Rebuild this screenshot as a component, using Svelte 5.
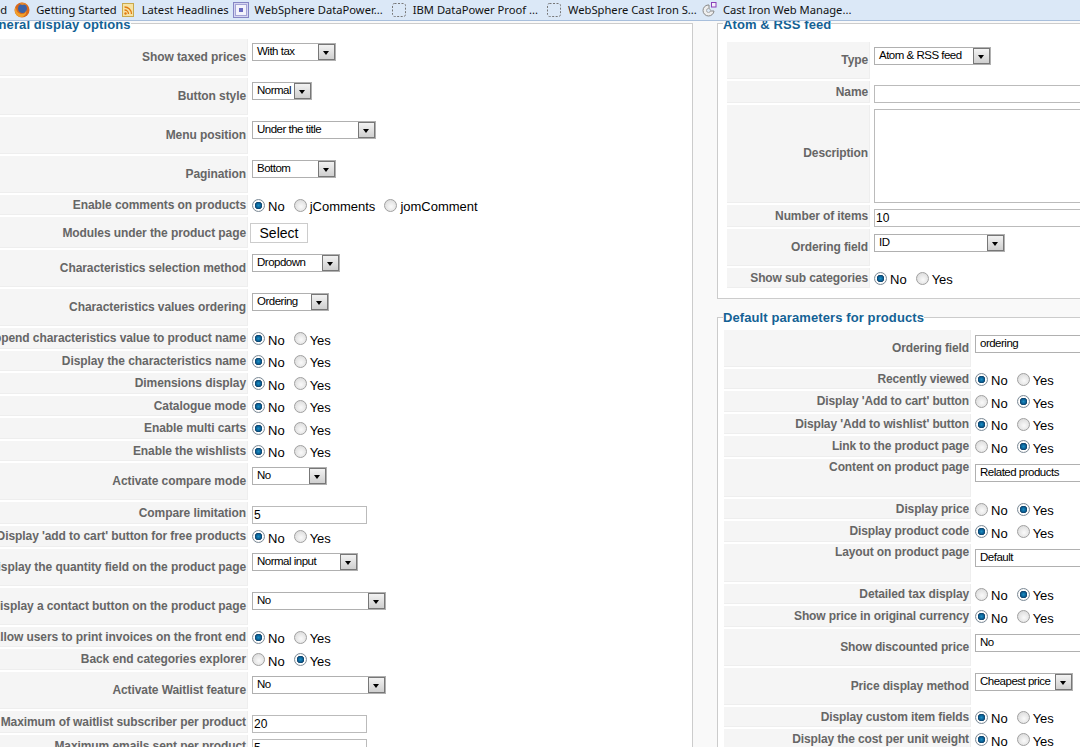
<script>
  // gap = space before each bookmark in the toolbar
  const links = [
    { icon: 'firefox', text: 'Getting Started', gap: 7 },
    { icon: 'rss', text: 'Latest Headlines', gap: 3 },
    { icon: 'square', text: 'WebSphere DataPower...', gap: 4 },
    { icon: 'dashed', text: 'IBM DataPower Proof ...', gap: 8 },
    { icon: 'dashed', text: 'WebSphere Cast Iron S...', gap: 8 },
    { icon: 'pie', text: 'Cast Iron Web Manage...', gap: 4 }
  ];

  const yn = (label, checked = 'No') => ({ kind: 'radio', label, checked, options: ['No', 'Yes'] });
  const sel = (label, value, width, top = false) => ({ kind: 'select', label, value, width, top });
  const txt = (label, value, width) => ({ kind: 'input', label, value, width });

  const general = [
    sel('Show taxed prices', 'With tax', 84),
    sel('Button style', 'Normal', 60),
    sel('Menu position', 'Under the title', 124),
    sel('Pagination', 'Bottom', 84),
    { kind: 'radio', label: 'Enable comments on products', checked: 'No', options: ['No', 'jComments', 'jomComment'] },
    { kind: 'button', label: 'Modules under the product page', value: 'Select' },
    sel('Characteristics selection method', 'Dropdown', 88),
    sel('Characteristics values ordering', 'Ordering', 77),
    yn('Append characteristics value to product name'),
    yn('Display the characteristics name'),
    yn('Dimensions display'),
    yn('Catalogue mode'),
    yn('Enable multi carts'),
    yn('Enable the wishlists'),
    sel('Activate compare mode', 'No', 75),
    txt('Compare limitation', '5', 115),
    yn("Display 'add to cart' button for free products"),
    sel('Display the quantity field on the product page', 'Normal input', 106),
    sel('Display a contact button on the product page', 'No', 134),
    yn('Allow users to print invoices on the front end'),
    yn('Back end categories explorer', 'Yes'),
    sel('Activate Waitlist feature', 'No', 134),
    txt('Maximum of waitlist subscriber per product', '20', 115),
    txt('Maximum emails sent per product', '5', 115)
  ];

  const feed = [
    sel('Type', 'Atom & RSS feed', 117),
    txt('Name', '', 320),
    { kind: 'textarea', label: 'Description' },
    txt('Number of items', '10', 320),
    sel('Ordering field', 'ID', 131),
    yn('Show sub categories')
  ];

  const defaults = [
    sel('Ordering field', 'ordering', 220),
    yn('Recently viewed'),
    yn("Display 'Add to cart' button", 'Yes'),
    yn("Display 'Add to wishlist' button"),
    yn('Link to the product page', 'Yes'),
    sel('Content on product page', 'Related products', 220, true),
    yn('Display price', 'Yes'),
    yn('Display product code'),
    sel('Layout on product page', 'Default', 220, true),
    yn('Detailed tax display', 'Yes'),
    yn('Show price in original currency'),
    sel('Show discounted price', 'No', 220),
    sel('Price display method', 'Cheapest price', 98),
    yn('Display custom item fields'),
    yn('Display the cost per unit weight')
  ];
</script>

{#snippet rows(list, group)}
  <div class="rows">
    {#each list as row, i}
      <div class="row row-{row.kind}" class:tall={row.top}>
        <div class="label" class:top={row.top}>{row.label}</div>
        <div class="value">
          {#if row.kind === 'select'}
            <div class="select" style="width: {row.width}px">
              <span class="current">{row.value}</span>
              <span class="arrow"></span>
            </div>
          {:else if row.kind === 'radio'}
            {#each row.options as option}
              <label class="option">
                <input type="radio" name="{group}-{i}" checked={option === row.checked} />
                {option}
              </label>
            {/each}
          {:else if row.kind === 'input'}
            <input class="text" type="text" value={row.value} style="width: {row.width}px" />
          {:else if row.kind === 'textarea'}
            <textarea></textarea>
          {:else}
            <button type="button">{row.value}</button>
          {/if}
        </div>
      </div>
    {/each}
  </div>
{/snippet}

<div class="toolbar">
  <span class="cut">ed</span>
  {#each links as link}
    <span class="link" style="margin-left: {link.gap}px">
      <svg width="16" height="16" viewBox="0 0 16 16">
        {#if link.icon === 'firefox'}
          <circle cx="8" cy="8" r="7.500" fill="#d9691c" />
          <circle cx="8.500" cy="6.500" r="4.500" fill="#3a62a8" />
          <path d="M2 5c0 5 3 7 6 7 3 0 4-2 4-4 1 3-1 6.500-4 7C4 15.500 0 12 1 7z" fill="#f0a02c" />
          <path d="M6 1c3-1 6 0 8 3-2-1-3-2-5-1-2 0-3-1-3-2z" fill="#e8882a" />
        {:else if link.icon === 'rss'}
          <rect x="2.500" y="1.500" width="11" height="13" fill="#f6e3a4" stroke="#c9a94e" />
          <circle cx="5.500" cy="11.500" r="1.200" fill="#e07a10" />
          <path d="M4.500 8a4 4 0 0 1 4 4M4.500 5a7 7 0 0 1 7 7" fill="none" stroke="#e07a10" stroke-width="1.300" />
        {:else if link.icon === 'square'}
          <rect x="0.500" y="0.500" width="15" height="15" fill="#d5d5f0" stroke="#8686c4" />
          <rect x="2.500" y="2.500" width="11" height="11" fill="#f3f3fb" stroke="#a4a4d6" />
          <rect x="6" y="6" width="4" height="4" fill="#6a6ac0" />
        {:else if link.icon === 'dashed'}
          <rect x="1.500" y="1.500" width="13" height="13" rx="2" fill="none" stroke="#777" stroke-dasharray="2 1.500" />
        {:else}
          <path d="M7 3a5.500 5.500 0 1 0 6 6H8V3z" fill="#eee" stroke="#888" />
          <circle cx="7.500" cy="8.500" r="2" fill="#dbe8f7" stroke="#aaa" />
          <rect x="10.500" y="0.500" width="4.500" height="4.500" fill="#f5eefa" stroke="#8a3fb8" />
        {/if}
      </svg>
      {link.text}
    </span>
  {/each}
</div>

<main>
  <fieldset class="general">
    <legend>General display options</legend>
    {@render rows(general, 'general')}
  </fieldset>

  <div class="side">
    <fieldset class="feed">
      <legend>Atom &amp; RSS feed</legend>
      {@render rows(feed, 'feed')}
    </fieldset>
    <fieldset class="defaults">
      <legend>Default parameters for products</legend>
      {@render rows(defaults, 'defaults')}
    </fieldset>
  </div>
</main>

<style>
  :global(body) {
    background: #f9f9f9;
    overflow: hidden;
  }

  .toolbar {
    height: 20px;
    display: flex;
    align-items: center;
    background: #dbe8f7;
    border-bottom: 1px solid #a8bfdc;
    font: 11.2px/20px "Noto Sans", sans-serif;
    color: #111;
    white-space: nowrap;
    overflow: hidden;
  }

  .cut {
    margin-left: -6px;
  }

  .link {
    display: flex;
    align-items: center;
    gap: 6px;
  }

  main {
    display: flex;
    align-items: flex-start;
    height: 726px;
    margin-left: -25px;
    overflow: hidden;
    font-family: "Liberation Sans", Arial, sans-serif;
  }

  fieldset {
    flex: none;
    min-width: 0;
    margin: 0;
    padding: 0 5px;
    background: #fff;
    border: 1px solid #ccc;
  }

  legend {
    padding: 0;
    font-size: 13px;
    line-height: 15px;
    font-weight: bold;
    letter-spacing: 0.1px;
    color: #146295;
  }

  .general legend,
  .feed legend {
    padding-top: 2px;
  }

  .general {
    width: 718px;
    height: 800px;
    margin-top: -6px;
    box-sizing: border-box;
    --label: 267px;
    --tracking: -0.08px;
  }

  .general .rows {
    padding-top: 6.5px;
  }

  .side {
    flex: none;
    width: 500px;
    margin-left: 24px;
    margin-top: -6px;
  }

  .feed {
    width: 100%;
    box-sizing: border-box;
    height: 284px;
    --label: 143px;
  }

  .feed .rows {
    padding: 9.5px 0 0 4px;
  }

  .defaults {
    width: 100%;
    box-sizing: border-box;
    margin-top: 10.5px;
    --label: 247px;
  }

  .defaults .rows {
    padding: 5px 0 0 1px;
  }

  .feed .row-select .value,
  .defaults .row-select .value {
    padding-top: 5px;
  }

  .rows {
    display: flex;
    flex-direction: column;
    gap: 2px;
  }

  .row {
    display: grid;
    grid-template-columns: var(--label) 1fr;
  }

  .row-radio {
    height: 20.5px;
  }

  .row-select {
    height: 37px;
  }

  .row-select.tall {
    height: 38px;
  }

  .row-input {
    height: 22px;
  }

  .row-button {
    height: 31px;
  }

  .row-textarea {
    height: 98px;
  }

  .label {
    display: flex;
    align-items: center;
    justify-content: flex-end;
    box-sizing: border-box;
    padding-right: 1px;
    background: #f5f5f5;
    border-right: 1px solid #eee;
    border-bottom: 1px solid #eee;
    font-size: 12px;
    font-weight: bold;
    letter-spacing: var(--tracking, -0.12px);
    color: #666;
    white-space: nowrap;
  }

  .row-radio .label,
  .row-input .label,
  .row-button .label {
    padding-top: 1px;
  }

  .label.top {
    align-items: flex-start;
    padding-top: 1px;
  }

  .value {
    display: flex;
    align-items: flex-start;
    padding: 4px 0 0 4px;
    color: #000;
  }

  .row-radio .value {
    align-items: center;
    padding-top: 4px;
  }

  .select {
    display: flex;
    justify-content: space-between;
    box-sizing: border-box;
    height: 18px;
    border: 1px solid #b0b0b0;
    background: #fff;
  }

  .current {
    padding-left: 4px;
    font-size: 11.5px;
    line-height: 15px;
    letter-spacing: -0.5px;
    white-space: nowrap;
  }

  .arrow {
    flex: none;
    position: relative;
    box-sizing: border-box;
    width: 17px;
    height: 16px;
    border: 1px solid #777;
    background: linear-gradient(#f2f2f2, #cfcfcf);
  }

  .arrow::after {
    content: "";
    position: absolute;
    left: 4px;
    top: 6px;
    border: 3.500px solid transparent;
    border-top: 4px solid #000;
    border-bottom: 0;
  }

  .option {
    display: flex;
    align-items: center;
    gap: 3px;
    margin-right: 9px;
    font-size: 13px;
  }

  input[type="radio"] {
    appearance: none;
    flex: none;
    width: 13px;
    height: 13px;
    margin: -3px 0 0;
    border-radius: 50%;
    border: 1px solid #a0a0a0;
    background: radial-gradient(circle at 55% 60%, #fafafa, #d4d4d4);
  }

  input[type="radio"]:checked {
    border-color: #7c8a96;
    background: radial-gradient(circle at 50% 50%, #1c8fc4 0, #0a5d92 2.500px, #0f3f66 3.500px, #fff 4px, #e4e4e4 100%);
  }

  .text {
    box-sizing: border-box;
    height: 18px;
    margin: 0;
    padding: 0 1px;
    border: 1px solid #bbb;
    font: 12px "Liberation Sans", sans-serif;
    color: #000;
    outline: none;
  }

  textarea {
    box-sizing: border-box;
    width: 320px;
    height: 94px;
    margin: 0;
    border: 1px solid #bbb;
    resize: none;
  }

  button {
    width: 58px;
    height: 20px;
    margin: 2px 0 0 -2px;
    padding: 0;
    background: #fff;
    border: 1px solid #ccc;
    font: 14px "Liberation Sans", sans-serif;
    color: #000;
  }
</style>
